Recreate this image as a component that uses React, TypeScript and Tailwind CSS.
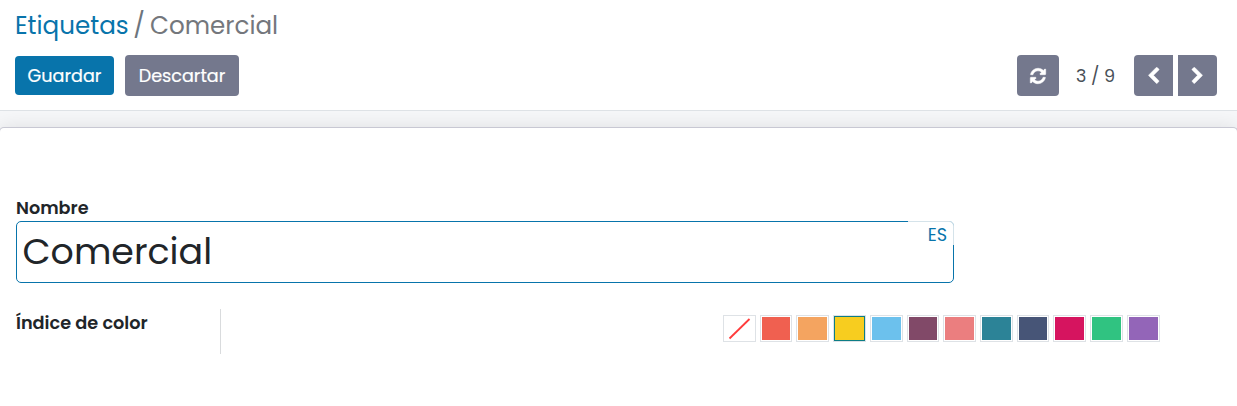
import React from "react";

const swatches = [
  "bg-[#f06050]",
  "bg-[#f4a460]",
  "bg-[#f7cd1f]",
  "bg-[#6cc1ed]",
  "bg-[#814968]",
  "bg-[#eb7e7f]",
  "bg-[#2c8397]",
  "bg-[#475577]",
  "bg-[#d6145f]",
  "bg-[#30c381]",
  "bg-[#9365b8]",
];
const SELECTED = 2;

function RefreshIcon() {
  return (
    <svg className="h-[18px] w-4 overflow-visible" viewBox="0 0 1536 1792" fill="currentColor" stroke="currentColor" strokeWidth="50">
      <path d="M1511 1056q0 5-1 7-64 268-268 434.500t-478 166.500q-146 0-282.500-55t-243.500-157l-129 129q-19 19-45 19t-45-19-19-45v-448q0-26 19-45t45-19h448q26 0 45 19t19 45-19 45l-137 137q71 66 161 102t187 36q134 0 250-65t186-179q11-17 53-117 8-23 30-23h192q13 0 22.500 9.500t9.500 22.500zm25-800v448q0 26-19 45t-45 19h-448q-26 0-45-19t-19-45 19-45l138-138q-148-137-349-137-134 0-250 65t-186 179q-11 17-53 117-8 23-30 23h-199q-13 0-22.500-9.500t-9.500-22.500v-7q65-268 270-434.500t480-166.500q146 0 284 55.500t245 156.500l130-129q19-19 45-19t45 19 19 45z" />
    </svg>
  );
}

function ChevronIcon({ right = false }: { right?: boolean }) {
  return (
    <svg className="h-[18px] w-[13px]" viewBox="0 0 1280 1792" fill="currentColor" stroke="currentColor" strokeWidth="50">
      {right ? (
        <path d="M1107 877l-742 742q-19 19-45 19t-45-19l-166-166q-19-19-19-45t19-45l531-531-531-531q-19-19-19-45t19-45L275 45q19-19 45-19t45 19l742 742q19 19 19 45t-19 45z" />
      ) : (
        <path d="M1171 301L640 832l531 531q19 19 19 45t-19 45l-166 166q-19 19-45 19t-45-19L173 877q-19-19-19-45t19-45L915 45q19-19 45-19t45 19l166 166q19 19 19 45t-19 45z" />
      )}
    </svg>
  );
}

export default function App() {
  return (
    <div className="flex h-[406px] w-full flex-col overflow-hidden bg-white font-['Poppins','Inter',sans-serif] text-[#212529]">
      <header className="h-[111px] shrink-0 border-b border-[#dee2e6] px-[15px] pr-5">
        <nav className="flex h-[55px] items-start whitespace-pre pt-2 text-[24.6px] leading-9">
          <a className="w-[113px] text-[#0874ab]">Etiquetas</a>
          <span className="w-[22px] text-center text-[#6c757d]">/</span>
          <span className="text-[#74777c]">Comercial</span>
        </nav>
        <div className="flex h-[41px] items-center">
          <button className="h-[39px] w-[99px] rounded-[4px] bg-[#0874ab] pt-0.5 text-[17.6px] text-white [-webkit-text-stroke:0.2px_white]">Guardar</button>
          <button className="ml-[11px] h-[41px] w-[114px] rounded-[4px] bg-[#74788d] pt-0.5 text-[17.6px] text-white [-webkit-text-stroke:0.2px_white]">Descartar</button>
          <div className="ml-auto flex items-center">
            <button className="flex h-[41px] w-[42px] items-center justify-center rounded-[4px] bg-[#74788d] text-white">
              <RefreshIcon />
            </button>
            <span className="w-[75px] pr-0.5 pt-0.5 text-center text-[17.6px] text-[#495057]">3 / 9</span>
            <button className="flex h-[41px] w-[39px] items-center justify-center rounded-l-[4px] bg-[#74788d] text-white">
              <ChevronIcon />
            </button>
            <button className="ml-[5px] flex h-[41px] w-[39px] items-center justify-center rounded-r-[4px] bg-[#74788d] text-white">
              <ChevronIcon right />
            </button>
          </div>
        </div>
      </header>

      <main className="flex min-h-0 flex-1 flex-col overflow-hidden bg-[#f6f7f9] pt-4">
        <section className="-mx-px flex-1 rounded-t-[5px] border border-b-0 border-[#c8c8d3] bg-white pl-4 pt-[68px] shadow-[0_0_20px_rgba(0,0,0,0.1)]">
          <label className="block h-[25px] text-[17.6px] font-semibold leading-6">Nombre</label>
          <div className="relative flex h-[62px] w-[938px] items-center rounded-[5px] border border-[#0874ab] pl-[5.500px]">
            <span className="text-[36.4px] leading-[56px]">Comercial</span>
            <span className="absolute -right-px -top-px flex h-6 w-[46px] items-center justify-end rounded-tr-[5px] border-r border-t border-[#d5e3ea] bg-white pr-1.5 pt-1 text-[17.6px] text-[#0874ab]">
              ES
            </span>
          </div>
          <div className="mt-[26px] flex h-[45px]">
            <div className="w-[205px] border-r border-[#d9dbdd] pt-0.5 text-[17.7px] font-semibold leading-6">
              Índice de color
            </div>
            <div className="ml-[502px] flex gap-1 pt-1.5">
              <div className="h-[27px] w-[32.73px] border border-[#dee2e6] bg-white">
                <svg className="block h-[25px] w-[31px]" viewBox="0 0 31 25">
                  <path d="M5.500 22.500L25.500 3" stroke="#ff3b3b" strokeWidth="1.800" />
                </svg>
              </div>
              {swatches.map((color, i) => (
                <div key={color} className="h-[27px] w-[32.73px] border border-[#dee2e6] bg-white">
                  <div
                    className={`${color} ${i === SELECTED ? "h-full w-full border border-[#0d7d85]" : "m-px h-[23px]"}`}
                  />
                </div>
              ))}
            </div>
          </div>
        </section>
      </main>
    </div>
  );
}
